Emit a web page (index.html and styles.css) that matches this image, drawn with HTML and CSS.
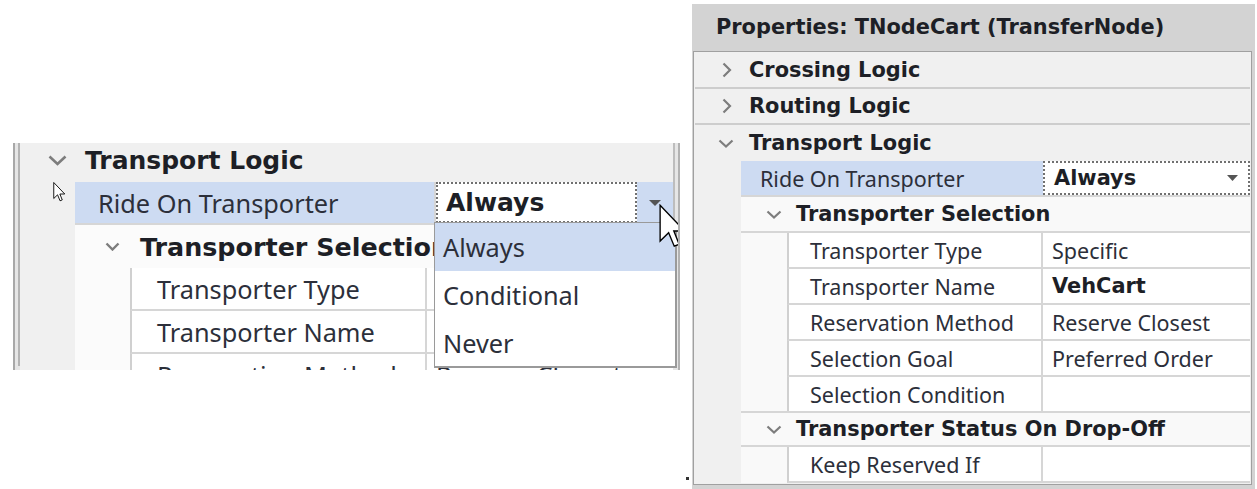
FILE: index.html
```html
<!DOCTYPE html>
<html>
<head>
<meta charset="utf-8">
<link rel="stylesheet" href="styles.css">
</head>
<body>
<div class="canvas">
  <div class="lp">
    <div class="lp-frame">
      <div class="lcat">
        <svg class="lchev" width="19" height="11" viewBox="0 0 19 11"><polyline points="1.5,1.5 9.5,9 17.5,1.5" fill="none" stroke="#7d7d7d" stroke-width="2.6"/></svg>
        <span class="bold">Transport Logic</span>
      </div>
      <div class="lgroup">
        <div class="lprop sel">
          <div class="llbl first">Ride On Transporter</div>
          <div class="lval edit">
            <span class="lbox bold">Always</span>
            <span class="lbtn"><svg width="12" height="6" viewBox="0 0 12 6"><polygon points="0,0 12,0 6,6" fill="#555"/></svg></span>
          </div>
        </div>
        <div class="lsub">
          <svg class="lsubchev" width="15" height="9" viewBox="0 0 15 9"><polyline points="1.5,1.5 7.5,7.5 13.5,1.5" fill="none" stroke="#7d7d7d" stroke-width="2.4"/></svg>
          <span class="bold">Transporter Selection</span>
        </div>
        <div class="lsubgroup">
          <div class="lprop"><div class="llbl">Transporter Type</div><div class="lval">Specific</div></div>
          <div class="lprop"><div class="llbl">Transporter Name</div><div class="lval bold">VehCart</div></div>
          <div class="lprop"><div class="llbl">Reservation Method</div><div class="lval">Reserve Closest</div></div>
        </div>
      </div>
    </div>
    <div class="list">
      <div class="item hi">Always</div>
      <div class="item">Conditional</div>
      <div class="item">Never</div>
    </div>
    <svg class="cur-small" width="13" height="20" viewBox="0 0 12.5 20"><path d="M0.5,0.5 L0.5,16.5 L4.3,12.8 L6.8,18.8 L9,17.9 L6.6,12 L11.5,12 Z" fill="#fff" stroke="#000" stroke-width="0.9"/></svg>
    <svg class="cur-big" width="28" height="45" viewBox="0 0 12.5 20"><path d="M0.5,0.5 L0.5,16.5 L4.3,12.8 L6.8,18.8 L9,17.9 L6.6,12 L11.5,12 Z" fill="#fff" stroke="#000" stroke-width="0.6"/></svg>
  </div>

  <div class="dot"></div>

  <div class="rp">
    <div class="rp-head bold">Properties: TNodeCart (TransferNode)</div>
    <div class="grid">
      <div class="rcat">
        <svg class="rchev-r" width="10" height="16" viewBox="0 0 10 16"><polyline points="1.5,1.5 8,8 1.5,14.5" fill="none" stroke="#7d7d7d" stroke-width="2.2"/></svg>
        <span class="bold">Crossing Logic</span>
      </div>
      <div class="rcat">
        <svg class="rchev-r" width="10" height="16" viewBox="0 0 10 16"><polyline points="1.5,1.5 8,8 1.5,14.5" fill="none" stroke="#7d7d7d" stroke-width="2.2"/></svg>
        <span class="bold">Routing Logic</span>
      </div>
      <div class="rcat open">
        <svg class="rchev-d" width="16" height="9" viewBox="0 0 16 9"><polyline points="1.5,1.5 8,7.5 14.5,1.5" fill="none" stroke="#7d7d7d" stroke-width="2.2"/></svg>
        <span class="bold">Transport Logic</span>
      </div>
      <div class="rgroup">
        <div class="rprop sel">
          <div class="rlbl first">Ride On Transporter</div>
          <div class="rval edit">
            <span class="bold">Always</span>
            <svg class="rtri" width="11" height="6" viewBox="0 0 11 6"><polygon points="0,0 11,0 5.5,6" fill="#555"/></svg>
          </div>
        </div>
        <div class="rsub">
          <svg class="rsubchev" width="16" height="9" viewBox="0 0 16 9"><polyline points="1.5,1.5 8,7.5 14.5,1.5" fill="none" stroke="#7d7d7d" stroke-width="2.2"/></svg>
          <span class="bold">Transporter Selection</span>
        </div>
        <div class="rsubgroup">
          <div class="rprop"><div class="rlbl">Transporter Type</div><div class="rval">Specific</div></div>
          <div class="rprop"><div class="rlbl">Transporter Name</div><div class="rval bold">VehCart</div></div>
          <div class="rprop"><div class="rlbl">Reservation Method</div><div class="rval">Reserve Closest</div></div>
          <div class="rprop"><div class="rlbl">Selection Goal</div><div class="rval">Preferred Order</div></div>
          <div class="rprop"><div class="rlbl">Selection Condition</div><div class="rval"></div></div>
        </div>
        <div class="rsub">
          <svg class="rsubchev" width="16" height="9" viewBox="0 0 16 9"><polyline points="1.5,1.5 8,7.5 14.5,1.5" fill="none" stroke="#7d7d7d" stroke-width="2.2"/></svg>
          <span class="bold">Transporter Status On Drop-Off</span>
        </div>
        <div class="rsubgroup">
          <div class="rprop"><div class="rlbl">Keep Reserved If</div><div class="rval"></div></div>
        </div>
      </div>
    </div>
  </div>
</div>
</body>
</html>
```

FILE: styles.css
```css
html, body {
  margin: 0;
  padding: 0;
  background: #ffffff;
}
body {
  width: 1257px;
  height: 489px;
  overflow: hidden;
  font-family: "Noto Sans", "Open Sans", sans-serif;
  color: #2c2f3a;
}
.bold {
  font-family: "DejaVu Sans", "Liberation Sans", sans-serif;
  font-weight: bold;
  color: #1d1f26;
}
.canvas {
  display: flex;
  align-items: flex-start;
}

/* ---------- left (zoomed) panel ---------- */
.lp {
  position: relative;
  margin: 143px 0 0 13px;
  width: 667px;
  height: 227px;
  box-sizing: border-box;
  overflow: hidden;
  border-left: 2px solid #a8a8a8;
  border-right: 2px solid #b2b2b2;
  padding: 0 3px;
  background: #e6e6e6;
  font-size: 25.3px;
}
.lp-frame {
  height: 100%;
  border-left: 2px solid #b4b4b4;
  border-right: 2px solid #bdbdbd;
  background: #f0f0f0;
}
.lcat {
  height: 43px;
  margin-top: -4px;
  display: flex;
  align-items: center;
  background: #f0f0f0;
}
.lcat .bold { font-size: 25px; }
.lchev { margin-left: 28px; margin-right: 18px; }
.lgroup {
  padding-left: 55px;
  background: #f0f0f0;
}
.lprop {
  display: flex;
  height: 43px;
  box-sizing: border-box;
  border-bottom: 2px solid #d6d6d6;
  background: #ffffff;
}
.llbl {
  flex: 1;
  display: flex;
  align-items: center;
  padding-left: 25px;
  border-right: 2px solid #d6d6d6;
  white-space: nowrap;
  overflow: hidden;
}
.llbl.first { padding-left: 23px; }
.lval {
  width: 237px;
  display: flex;
  align-items: center;
  padding-left: 9px;
  white-space: nowrap;
  overflow: hidden;
}
.lval.bold { font-size: 25px; }
.lprop.sel .llbl { background: #cddbf2; }
.lval.edit {
  padding-left: 0;
  align-items: stretch;
}
.lbox {
  flex: 1;
  display: flex;
  align-items: center;
  padding-left: 8px;
  border: 2px dotted #707070;
  background: #ffffff;
  font-size: 25px;
}
.lbtn {
  width: 36px;
  display: flex;
  align-items: center;
  justify-content: center;
  background: #cddbf2;
}
.lsub {
  height: 43px;
  box-sizing: border-box;
  display: flex;
  align-items: center;
  background: #fbfbfb;
  white-space: nowrap;
}
.lsub .bold { font-size: 25.4px; }
.lsubchev { margin-left: 30px; margin-right: 20px; }
.lsubgroup {
  padding-left: 55px;
  background: #fbfbfb;
}
.lsubgroup .lprop { border-left: 2px solid #d0d0d0; }

.list {
  position: absolute;
  left: 419px;
  top: 79px;
  width: 243px;
  height: 146px;
  box-sizing: border-box;
  border: 1px solid #9a9a9a;
  border-right-width: 2px;
  border-bottom-width: 2px;
  background: #ffffff;
}
.item {
  height: 48px;
  display: flex;
  align-items: center;
  padding-left: 8px;
}
.item.hi { background: #cddbf2; }

.cur-small {
  position: absolute;
  left: 38px;
  top: 39px;
}
.cur-big {
  position: absolute;
  left: 644px;
  top: 61px;
}

.dot {
  width: 3px;
  height: 3px;
  background: #333333;
  margin: 477px 0 0 6px;
}

/* ---------- right panel ---------- */
.rp {
  margin: 4px 0 0 3px;
  width: 563px;
  height: 485px;
  background: #d3d3d3;
  overflow: hidden;
  font-size: 21.5px;
}
.rp-head {
  height: 47px;
  line-height: 47px;
  padding-left: 24px;
  font-size: 20.9px;
  white-space: nowrap;
}
.grid {
  margin-left: 1px;
  width: 559px;
  box-sizing: border-box;
  border: 1px solid #a0a0a0;
  padding: 1px;
  background: #f0f0f0;
}
.rcat {
  height: 36px;
  box-sizing: border-box;
  display: flex;
  align-items: center;
  border-bottom: 2px solid #cdcdcd;
  background: #f0f0f0;
}
.rcat.open { border-bottom: none; }
.rcat .bold { font-size: 20.9px; }
.rchev-r { margin-left: 27px; margin-right: 17px; }
.rchev-d { margin-left: 23px; margin-right: 15px; }
.rgroup {
  padding-left: 46px;
  background: #f0f0f0;
}
.rprop {
  display: flex;
  height: 36px;
  box-sizing: border-box;
  border-bottom: 2px solid #d6d6d6;
  background: #ffffff;
}
.rlbl {
  flex: 1;
  display: flex;
  align-items: center;
  padding-left: 21px;
  border-right: 2px solid #d6d6d6;
  white-space: nowrap;
  overflow: hidden;
}
.rlbl.first { padding-left: 19px; }
.rval {
  width: 198px;
  display: flex;
  align-items: center;
  padding-left: 9px;
  white-space: nowrap;
  overflow: hidden;
}
.rval.bold { font-size: 20.9px; }
.rprop.sel .rlbl { background: #cddbf2; border-right: none; }
.rval.edit {
  width: 207px;
  box-sizing: border-box;
  padding-left: 9px;
  border: 2px dotted #707070;
  justify-content: space-between;
}
.rval.edit .bold { font-size: 20.9px; }
.rtri { margin-right: 10px; }
.rsub {
  height: 36px;
  box-sizing: border-box;
  display: flex;
  align-items: center;
  border-bottom: 2px solid #d6d6d6;
  background: #f9f9f9;
  white-space: nowrap;
}
.rsub .bold { font-size: 20.9px; }
.rsubchev { margin-left: 25px; margin-right: 14px; }
.rsubgroup {
  padding-left: 46px;
  background: #f9f9f9;
}
.rsubgroup .rprop { border-left: 2px solid #d0d0d0; }
.rgroup > .rsub + .rsubgroup + .rsub { border-top: 2px solid #d6d6d6; margin-top: -2px; }
```
